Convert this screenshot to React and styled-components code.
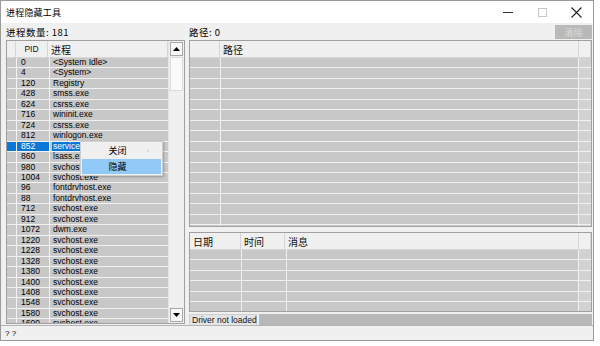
import React from "react";
import styled, { createGlobalStyle } from "styled-components";

const GlobalStyle = createGlobalStyle`
  html, body {
    margin: 0;
    background: #ffffff;
  }
  * { box-sizing: border-box; }
`;

const processes = [
  ["0", "<System Idle>"],
  ["4", "<System>"],
  ["120", "Registry"],
  ["428", "smss.exe"],
  ["624", "csrss.exe"],
  ["716", "wininit.exe"],
  ["724", "csrss.exe"],
  ["812", "winlogon.exe"],
  ["852", "services.exe"],
  ["860", "lsass.exe"],
  ["980", "svchost.exe"],
  ["1004", "svchost.exe"],
  ["96", "fontdrvhost.exe"],
  ["88", "fontdrvhost.exe"],
  ["712", "svchost.exe"],
  ["912", "svchost.exe"],
  ["1072", "dwm.exe"],
  ["1220", "svchost.exe"],
  ["1228", "svchost.exe"],
  ["1328", "svchost.exe"],
  ["1380", "svchost.exe"],
  ["1400", "svchost.exe"],
  ["1408", "svchost.exe"],
  ["1548", "svchost.exe"],
  ["1580", "svchost.exe"],
  ["1600", "svchost.exe"],
];

const App = () => {
  return (
    <>
      <GlobalStyle />
      <Window>
        <TitleBar>
          <Title>进程隐藏工具</Title>
          <Controls>
            <CtrlButton>
              <svg width="10" height="10" viewBox="0 0 10 10">
                <path d="M0 5.5h10" stroke="#333" strokeWidth="1" />
              </svg>
            </CtrlButton>
            <CtrlButton>
              <svg width="10" height="10" viewBox="0 0 10 10">
                <rect x="1.5" y="1.5" width="8" height="8" fill="none" stroke="#c8c8c8" />
              </svg>
            </CtrlButton>
            <CtrlButton>
              <svg width="11" height="11" viewBox="0 0 11 11">
                <path d="M0.5 0.5l10 10M10.5 0.5l-10 10" stroke="#222" strokeWidth="1.1" />
              </svg>
            </CtrlButton>
          </Controls>
        </TitleBar>

        <Client>
          <LeftPane>
            <Caption>进程数量: 181</Caption>
            <ListBox>
              <ListMain>
                <HeaderRow $cols="9px 32px 1fr">
                  <HeadCell />
                  <HeadCell $center>PID</HeadCell>
                  <HeadCell $cjk>进程</HeadCell>
                </HeaderRow>
                <Rows>
                  {processes.map(([pid, name]) => {
                    const sel = pid === "852";
                    return (
                      <Row key={pid} $cols="9px 32px 1fr">
                        <Cell $sel={sel} />
                        <Cell $sel={sel} $pad="4px">{pid}</Cell>
                        <Cell>
                          <NameText $sel={sel}>{name}</NameText>
                        </Cell>
                      </Row>
                    );
                  })}
                </Rows>
              </ListMain>
              <ScrollBar>
                <ScrollBtn>
                  <svg width="7" height="4" viewBox="0 0 7 4">
                    <path d="M0 4L3.5 0L7 4Z" fill="#000" />
                  </svg>
                </ScrollBtn>
                <Thumb />
                <Track />
                <ScrollBtn>
                  <svg width="7" height="4" viewBox="0 0 7 4">
                    <path d="M0 0L3.5 4L7 0Z" fill="#000" />
                  </svg>
                </ScrollBtn>
              </ScrollBar>

              <Menu>
                <MenuItem>
                  关闭<MenuMark>·</MenuMark>
                </MenuItem>
                <MenuItem $active>隐藏</MenuItem>
              </Menu>
            </ListBox>
          </LeftPane>

          <RightPane>
            <TopRow>
              <Caption>路径: 0</Caption>
              <ClearButton>清除</ClearButton>
            </TopRow>
            <PathBox>
              <ListMain>
                <HeaderRow $cols="30px 1fr 12px">
                  <HeadCell />
                  <HeadCell $cjk>路径</HeadCell>
                  <HeadCell />
                </HeaderRow>
                <Rows>
                  {Array.from({ length: 17 }).map((_, i) => (
                    <Row key={i} $cols="30px 1fr 12px">
                      <Cell />
                      <Cell />
                      <Cell $light />
                    </Row>
                  ))}
                </Rows>
              </ListMain>
            </PathBox>
            <LogBox>
              <ListMain>
                <HeaderRow $cols="51px 44px 1fr 12px">
                  <HeadCell $cjk>日期</HeadCell>
                  <HeadCell $cjk>时间</HeadCell>
                  <HeadCell $cjk>消息</HeadCell>
                  <HeadCell />
                </HeaderRow>
                <Rows>
                  {Array.from({ length: 6 }).map((_, i) => (
                    <Row key={i} $cols="51px 44px 1fr 12px">
                      <Cell />
                      <Cell />
                      <Cell />
                      <Cell $light />
                    </Row>
                  ))}
                </Rows>
              </ListMain>
            </LogBox>
            <StatusRow>
              <StatusPanel>Driver not loaded</StatusPanel>
              <StatusFill />
            </StatusRow>
          </RightPane>
        </Client>

        <Footer>? ?</Footer>
      </Window>
    </>
  );
};

export default App;

const Window = styled.div`
  width: 594px;
  height: 341px;
  border: 1px solid #9a9a9a;
  display: flex;
  flex-direction: column;
  background: #f0f0f0;
  font-family: "Liberation Sans", Arial, sans-serif;
  color: #000;
`;

const TitleBar = styled.div`
  height: 22px;
  background: #ffffff;
  display: flex;
  align-items: center;
  padding-left: 5px;
`;

const Title = styled.div`
  font-family: "Noto Sans CJK SC", sans-serif;
  font-size: 9px;
  letter-spacing: 0.2px;
  flex: 1;
`;

const Controls = styled.div`
  display: flex;
  align-items: center;
  height: 100%;
`;

const CtrlButton = styled.div`
  width: 34px;
  height: 100%;
  display: flex;
  align-items: center;
  justify-content: center;
`;

const Client = styled.div`
  flex: 1;
  display: grid;
  grid-template-columns: 179px 1fr;
  column-gap: 4px;
  padding: 0 1px 0 5px;
  min-height: 0;
`;

const LeftPane = styled.div`
  display: flex;
  flex-direction: column;
`;

const RightPane = styled.div`
  display: flex;
  flex-direction: column;
`;

const Caption = styled.div`
  height: 17px;
  display: flex;
  align-items: center;
  font-family: "Noto Sans CJK SC", sans-serif;
  font-size: 9.5px;
  letter-spacing: 0.5px;
`;

const TopRow = styled.div`
  height: 17px;
  display: flex;
  align-items: center;
  justify-content: space-between;
`;

const ClearButton = styled.div`
  width: 37px;
  height: 14px;
  margin-top: 1px;
  background: #b9b9b9;
  color: #dcdcdc;
  font-family: "Noto Sans CJK SC", sans-serif;
  font-size: 9px;
  display: flex;
  align-items: center;
  justify-content: center;
`;

const ListBox = styled.div`
  position: relative;
  height: 284px;
  border: 1px solid #a0a0a0;
  display: flex;
  overflow: hidden;
  background: #f4f4f4;
`;

const PathBox = styled.div`
  height: 187px;
  border: 1px solid #a0a0a0;
  display: flex;
  overflow: hidden;
  background: #f4f4f4;
`;

const LogBox = styled.div`
  margin-top: 5px;
  height: 80px;
  border: 1px solid #a0a0a0;
  display: flex;
  overflow: hidden;
  background: #f4f4f4;
`;

const ListMain = styled.div`
  flex: 1;
  display: flex;
  flex-direction: column;
  min-width: 0;
`;

const HeaderRow = styled.div`
  height: 17px;
  flex: none;
  display: grid;
  grid-template-columns: ${(p) => p.$cols};
  background: #f0f0f0;
  border-bottom: 1px solid #d6d6d6;
`;

const HeadCell = styled.div`
  border-right: 1px solid #d6d6d6;
  display: flex;
  align-items: center;
  justify-content: ${(p) => (p.$center ? "center" : "flex-start")};
  padding-left: ${(p) => (p.$center ? "0" : "3px")};
  font-family: ${(p) =>
    p.$cjk ? `"Noto Sans CJK SC", sans-serif` : `"Liberation Sans", Arial, sans-serif`};
  font-size: ${(p) => (p.$cjk ? "10px" : "8.5px")};
  color: #111;
`;

const Rows = styled.div`
  display: flex;
  flex-direction: column;
`;

const Row = styled.div`
  height: 10.46px;
  flex: none;
  display: grid;
  grid-template-columns: ${(p) => p.$cols};
  column-gap: 1px;
  border-bottom: 1px solid #f2f2f2;
  background: #f2f2f2;
`;

const Cell = styled.div`
  background: ${(p) => (p.$sel ? "#0a78d7" : p.$light ? "#d2d2d2" : "#c8c8c8")};
  color: ${(p) => (p.$sel ? "#ffffff" : "#000")};
  font-size: 8.5px;
  line-height: 9.5px;
  padding-left: ${(p) => p.$pad || "3px"};
  white-space: nowrap;
  overflow: hidden;
`;

const NameText = styled.span`
  display: inline-block;
  height: 100%;
  padding-right: 2px;
  background: ${(p) => (p.$sel ? "#0a78d7" : "transparent")};
  color: ${(p) => (p.$sel ? "#ffffff" : "#000")};
  margin-left: -1px;
  padding-left: 1px;
`;

const ScrollBar = styled.div`
  width: 16px;
  display: flex;
  flex-direction: column;
  background: #f0f0f0;
  border-left: 1px solid #e4e4e4;
`;

const ScrollBtn = styled.div`
  height: 14px;
  margin: 1px;
  border: 1px solid #a8a8a8;
  background: #f8f8f8;
  display: flex;
  align-items: center;
  justify-content: center;
`;

const Thumb = styled.div`
  height: 34px;
  margin: 0 1px;
  background: #fafafa;
  border: 1px solid #dadada;
`;

const Track = styled.div`
  flex: 1;
`;

const Menu = styled.div`
  position: absolute;
  left: 73px;
  top: 100px;
  width: 83px;
  padding: 1px;
  background: #f0f0f0;
  border: 1px solid #cfcfcf;
  box-shadow: 1px 1px 2px rgba(0, 0, 0, 0.25);
  font-family: "Noto Sans CJK SC", sans-serif;
  font-size: 9px;
`;

const MenuItem = styled.div`
  position: relative;
  height: 15px;
  display: flex;
  align-items: center;
  justify-content: center;
  padding-right: 8px;
  background: ${(p) => (p.$active ? "#91c9f7" : "transparent")};
  margin-top: ${(p) => (p.$active ? "1px" : "0")};
`;

const MenuMark = styled.span`
  position: absolute;
  right: 9px;
  color: #c8c8c8;
  font-size: 8px;
`;

const StatusRow = styled.div`
  margin-top: 2px;
  height: 12px;
  display: flex;
  gap: 2px;
`;

const StatusPanel = styled.div`
  width: 68px;
  background: #e4e4e4;
  border: 1px solid #cfcfcf;
  font-size: 8.5px;
  white-space: nowrap;
  display: flex;
  align-items: center;
  padding-left: 2px;
  color: #111;
`;

const StatusFill = styled.div`
  flex: 1;
  background: #b8b8b8;
`;

const Footer = styled.div`
  height: 15px;
  margin-top: 1px;
  border-top: 1px solid #b4b4b4;
  background: #f0f0f0;
  font-size: 8px;
  padding-left: 4px;
  display: flex;
  align-items: center;
`;
